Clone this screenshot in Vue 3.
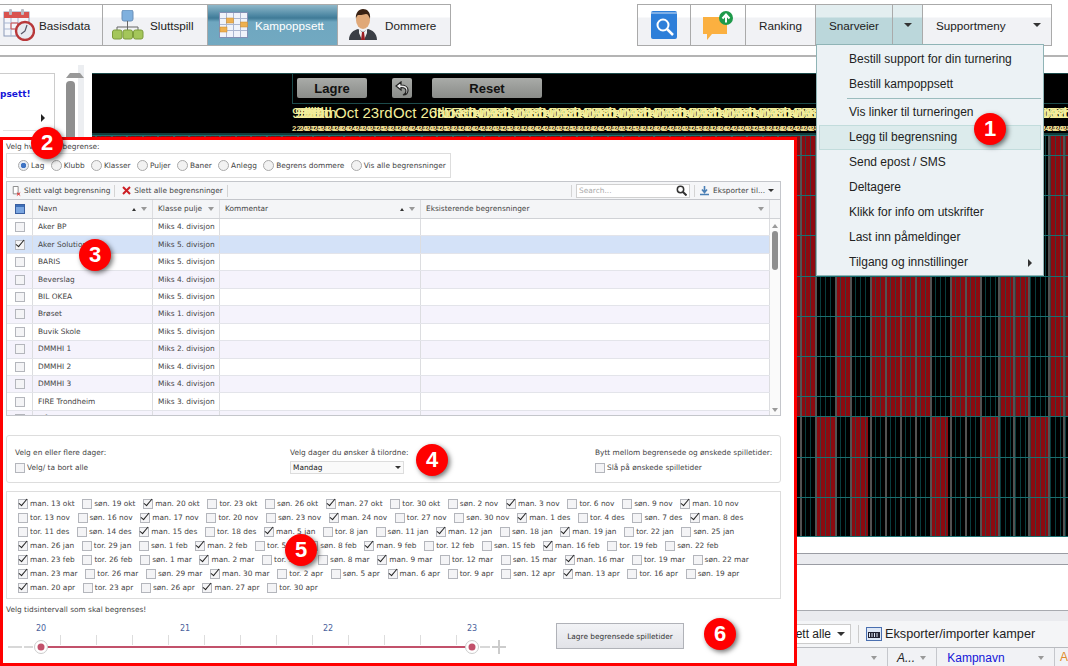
<script setup>
const leftTabs = ['Basisdata', 'Sluttspill', 'Kampoppsett', 'Dommere']
const menu = [
  { t: 'Bestill support for din turnering' },
  { t: 'Bestill kampoppsett', sep: true },
  { t: 'Vis linker til turneringen' },
  { t: 'Legg til begrensning', hot: true },
  { t: 'Send epost / SMS' },
  { t: 'Deltagere' },
  { t: 'Klikk for info om utskrifter' },
  { t: 'Last inn påmeldinger' },
  { t: 'Tilgang og innstillinger', sub: true }
]
const radios = ['Lag', 'Klubb', 'Klasser', 'Puljer', 'Baner', 'Anlegg', 'Begrens dommere', 'Vis alle begrensninger']
const rows = [
  ['Aker BP', 'Miks 4. divisjon'], ['Aker Solutions', 'Miks 5. divisjon'], ['BARIS', 'Miks 5. divisjon'],
  ['Beverslag', 'Miks 4. divisjon'], ['BIL OKEA', 'Miks 5. divisjon'], ['Brøset', 'Miks 1. divisjon'],
  ['Buvik Skole', 'Miks 5. divisjon'], ['DMMHI 1', 'Miks 2. divisjon'], ['DMMHI 2', 'Miks 4. divisjon'],
  ['DMMHI 3', 'Miks 4. divisjon'], ['FIRE Trondheim', 'Miks 3. divisjon'], ['Flå', 'Miks 1. divisjon']
]
const dateRows = [
  ['man. 13 okt', 'søn. 19 okt', 'man. 20 okt', 'tor. 23 okt', 'søn. 26 okt', 'man. 27 okt', 'tor. 30 okt', 'søn. 2 nov', 'man. 3 nov', 'tor. 6 nov', 'søn. 9 nov', 'man. 10 nov'],
  ['tor. 13 nov', 'søn. 16 nov', 'man. 17 nov', 'tor. 20 nov', 'søn. 23 nov', 'man. 24 nov', 'tor. 27 nov', 'søn. 30 nov', 'man. 1 des', 'tor. 4 des', 'søn. 7 des', 'man. 8 des'],
  ['tor. 11 des', 'søn. 14 des', 'man. 15 des', 'tor. 18 des', 'man. 5 jan', 'tor. 8 jan', 'søn. 11 jan', 'man. 12 jan', 'søn. 18 jan', 'man. 19 jan', 'tor. 22 jan', 'søn. 25 jan'],
  ['man. 26 jan', 'tor. 29 jan', 'søn. 1 feb', 'man. 2 feb', 'tor. 5 feb', 'søn. 8 feb', 'man. 9 feb', 'tor. 12 feb', 'søn. 15 feb', 'man. 16 feb', 'tor. 19 feb', 'søn. 22 feb'],
  ['man. 23 feb', 'tor. 26 feb', 'søn. 1 mar', 'man. 2 mar', 'tor. 5 mar', 'søn. 8 mar', 'man. 9 mar', 'tor. 12 mar', 'søn. 15 mar', 'man. 16 mar', 'tor. 19 mar', 'søn. 22 mar'],
  ['man. 23 mar', 'tor. 26 mar', 'søn. 29 mar', 'man. 30 mar', 'tor. 2 apr', 'søn. 5 apr', 'man. 6 apr', 'tor. 9 apr', 'søn. 12 apr', 'man. 13 apr', 'tor. 16 apr', 'søn. 19 apr'],
  ['man. 20 apr', 'tor. 23 apr', 'søn. 26 apr', 'man. 27 apr', 'tor. 30 apr']
]

// Canvas header: the overlapping date labels of the schedule grid
const bigDates = []
for (const x of [200, 203, 206, 209, 212, 216, 220, 224]) bigDates.push({ x, t: '9th' })
bigDates.push({ x: 220, t: 'Oc' }, { x: 243, t: 'Oct 23rd' }, { x: 301, t: 'Oct 26th' })
for (let x = 338; x < 990; x += 7) bigDates.push({ x, t: ['Nov 6', 'Nov 12', 'Dec 4', 'Jan 8', 'Feb 19'][x % 5] })
const tinyDates = []
for (let x = 200; x < 976; x += 7) tinyDates.push({ x, t: '2' + (x % 9) + '/' + (x % 7) })

// Canvas grid: lines and coloured day blocks (x relative to the canvas)
const redUpper = [[0, 725], [743, 760], [778, 838], [858, 888], [906, 936], [956, 976]]
const redLower = [[725, 743], [760, 776], [838, 856], [888, 906], [938, 956]]
const thick = [708, 723, 743, 758, 778, 793, 808, 823, 838, 858, 873, 888, 906, 921, 936, 956, 971]
for (let x = 3; x < 700; x += 15.5) thick.push(Math.round(x))
const thin = []
for (let x = 8; x < 976; x += 5) thin.push(Math.round(x))
const hLines = [0, 20, 60, 100, 141, 181, 221, 261, 281, 322, 362, 401]

const ticks = []
for (let x = 60; x < 470; x += 36) ticks.push(x - 6)
const hours = [{ x: 35, t: '20' }, { x: 179, t: '21' }, { x: 322, t: '22' }, { x: 466, t: '23' }]
const badges = [
  { n: 1, x: 990, y: 129 }, { n: 2, x: 47, y: 143 }, { n: 3, x: 95, y: 255 },
  { n: 4, x: 432, y: 460 }, { n: 5, x: 301, y: 550 }, { n: 6, x: 720, y: 634 }
]
const isMan = (d) => d.startsWith('man')
</script>

<template>
  <div class="page">
    <header class="topbar">
      <nav class="group">
        <div v-for="(t, i) in leftTabs" :key="t" class="tab" :class="['tab' + i, { active: i === 2 }]">
          <svg v-if="i === 0" class="ic" width="32" height="32" viewBox="0 0 32 32">
            <rect x="1" y="3" width="25" height="24" fill="#f4f6fb" stroke="#8c9ab8" />
            <rect x="1" y="3" width="25" height="6" fill="#d9534f" />
            <path d="M1 14h25M1 20h25M8 9v18M15 9v18" stroke="#a9b7d2" fill="none" />
            <path d="M8 14h7v6H8z" fill="none" stroke="#d9534f" />
            <rect x="6" y="0" width="3" height="6" rx="1" fill="#b9bcc4" /><rect x="18" y="0" width="3" height="6" rx="1" fill="#b9bcc4" />
            <circle cx="22" cy="22" r="9" fill="#e8eaf0" stroke="#b8383a" stroke-width="2.400" />
            <path d="M22 22l-4 3M22 22l2-6" stroke="#556" stroke-width="1.200" />
          </svg>
          <svg v-if="i === 1" class="ic" width="32" height="30" viewBox="0 0 32 30">
            <rect x="10" y="0" width="11" height="11" rx="2" fill="#7fb0de" stroke="#6a8fb8" />
            <path d="M15.500 11v6M5 21v-4h21v4M15.500 17v4" stroke="#666" fill="none" />
            <rect x="0.500" y="20" width="9.500" height="9" rx="2" fill="#a4c65a" stroke="#7d9c3c" />
            <rect x="11" y="20" width="9.500" height="9" rx="2" fill="#a4c65a" stroke="#7d9c3c" />
            <rect x="21.500" y="20" width="9.500" height="9" rx="2" fill="#a4c65a" stroke="#7d9c3c" />
          </svg>
          <svg v-if="i === 2" class="ic" width="30" height="26" viewBox="0 0 30 26">
            <rect x="0.500" y="0.500" width="28" height="25" fill="#f0f3fa" stroke="#8290b5" />
            <path d="M7.500 1v24M14.500 1v24M21.500 1v24M1 6.500h27M1 12.500h27M1 18.500h27" stroke="#aab6d0" fill="none" />
            <rect x="7.500" y="6" width="7" height="5" fill="#eeb04f" stroke="#c98a2f" stroke-width=".5" /><rect x="21.500" y="10" width="7" height="5" fill="#eeb04f" stroke="#c98a2f" stroke-width=".5" /><rect x="1" y="15" width="7" height="5" fill="#eeb04f" stroke="#c98a2f" stroke-width=".5" />
          </svg>
          <svg v-if="i === 3" class="ic" width="29" height="32" viewBox="0 0 29 32">
            <path d="M0 31c0-7 5-10 9-11l5 3 5-3c4 1 9 4 9 11z" fill="#3b3f46" />
            <path d="M10 20l4 4 4-4 0 4-3 7h-2l-3-7z" fill="#f1f1f1" />
            <path d="M13 23h2l1 8h-4z" fill="#9c1f24" />
            <ellipse cx="14" cy="11" rx="7" ry="9" fill="#e0a878" />
            <path d="M7 10c-1-6 3-10 7-10s8 3 7 10c-1-3-2-5-4-5-3 1-7 1-8 1-1 1-2 2-2 4z" fill="#3a2113" />
          </svg>
          <span>{{ t }}</span>
        </div>
      </nav>
      <nav class="group right">
        <div class="cell c-book">
          <svg width="26" height="28" viewBox="0 0 26 28">
            <rect width="26" height="28" rx="2" fill="#2e7fd9" /><rect y="1.500" width="26" height="1" fill="#cfe2f6" />
            <circle cx="12" cy="14" r="5.500" fill="none" stroke="#fff" stroke-width="2" /><path d="M16 18l6 6" stroke="#fff" stroke-width="2.500" />
          </svg>
        </div>
        <div class="cell c-chat">
          <svg width="31" height="29" viewBox="0 0 31 29">
            <path d="M0 6h24v17H9l-5 6v-6H0z" fill="#fbb040" />
            <circle cx="23" cy="7" r="7" fill="#1e9a4a" /><path d="M23 11.500V4M19.500 7.500L23 3.500l3.500 4" stroke="#fff" stroke-width="2" fill="none" />
          </svg>
        </div>
        <div class="cell c-rank">Ranking</div>
        <div class="cell c-snar on">Snarveier</div>
        <div class="cell c-caret on"><i class="caret"></i></div>
        <div class="cell c-supp">Supportmeny<i class="caret"></i></div>
      </nav>
    </header>

    <section class="main">
      <aside class="pane">
        <div class="pane-box">
          <b class="pane-link">psett!</b>
          <i class="pane-arrow"></i>
        </div>
        <div class="pane-scroll"><i class="up"></i><i class="thumb"></i></div>
      </aside>
      <div class="canvas">
        <div class="canvas-head">
          <div class="canvas-tools">
            <button class="btn lagre">Lagre</button>
            <button class="btn undo">
              <svg width="14" height="15" viewBox="0 0 14 15"><path d="M6 1L1 5l5 4V6.500c3 0 5 1 5 3.500 0 2-1 3-3 4 4 0 5-2.500 5-5 0-3-3-5-7-5z" fill="#eee" stroke="#222" stroke-width="1.200" /></svg>
            </button>
            <button class="btn reset">Reset</button>
          </div>
          <span v-for="(d, i) in bigDates" :key="'b' + i" class="big" :style="{ left: d.x + 'px' }">{{ d.t }}</span>
          <span v-for="(d, i) in tinyDates" :key="'t' + i" class="tiny" :style="{ left: d.x + 'px' }">{{ d.t }}</span>
        </div>
        <svg class="grid" width="976" height="402" viewBox="0 0 976 402">
          <rect v-for="r in redUpper" :key="'u' + r[0]" :x="r[0]" y="0" :width="r[1] - r[0]" height="281" fill="#8c0a10" />
          <rect v-for="r in redLower" :key="'l' + r[0]" :x="r[0]" y="281" :width="r[1] - r[0]" height="121" fill="#8c0a10" />
          <path v-for="x in thin" :key="'n' + x" :d="`M${x + .5} 0V402`" stroke="#0d5557" stroke-opacity=".7" />
          <path v-for="x in thick" :key="'k' + x" :d="`M${x + 1} 0V402`" stroke="#525252" stroke-width="2" />
          <path v-for="y in hLines" :key="'h' + y" :d="`M0 ${y + .5}H976`" stroke="#1a6f70" />
        </svg>
      </div>
    </section>

    <div class="gap"></div>
    <div class="splitter"></div>
    <div class="blank"></div>
    <div class="strip"></div>
    <div class="lower-tools">
      <div class="select-all"><span>Slett alle</span><i class="caret"></i></div>
      <i class="vsep"></i>
      <svg width="16" height="14" viewBox="0 0 16 14"><rect x=".5" y=".5" width="15" height="13" fill="#dfe8f6" stroke="#4a6fb0" /><rect x="2" y="5" width="12" height="6" fill="#223" /><path d="M3.500 6v4M6 6v4M8.500 6v4M11 6v4" stroke="#dfe8f6" /></svg>
      <span class="xml">Eksporter/importer kamper</span>
    </div>
    <div class="lower-head">
      <div class="lh lh1"><i class="funnel"></i></div>
      <div class="lh lh2"><em>A...</em><i class="funnel"></i></div>
      <div class="lh lh3"><span class="kn">Kampnavn</span><i class="funnel"></i></div>
      <div class="lh4">A</div>
    </div>

    <div class="dropdown">
      <div v-for="m in menu" :key="m.t" class="mi" :class="{ hot: m.hot, sep: m.sep }">
        {{ m.t }}<i v-if="m.sub" class="subarrow"></i>
      </div>
    </div>

    <div class="modal">
      <div class="lbl">Velg hva du vil begrense:</div>
      <div class="radios">
        <label v-for="(r, i) in radios" :key="r" class="radio"><i class="dot" :class="{ sel: i === 0 }"></i>{{ r }}</label>
      </div>
      <div class="table">
        <div class="ttools">
          <svg width="9" height="12" viewBox="0 0 11 12"><path d="M1.500 .5h6v9h-6z" fill="#fff" stroke="#777" /><path d="M6 8l4 3.500M10 8l-4 3.500" stroke="#d22" stroke-width="1.200" /></svg>
          <span class="tl">Slett valgt begrensning</span><i class="tsep"></i>
          <svg class="xicon" width="9" height="9" viewBox="0 0 9 9"><path d="M1 1l7 7M8 1L1 8" stroke="#cc1f25" stroke-width="2" /></svg>
          <span class="tl">Slett alle begrensninger</span><i class="tsep"></i>
          <div class="spacer"></div>
          <i class="tsep"></i>
          <div class="search"><span>Search...</span>
            <svg width="11" height="11" viewBox="0 0 11 11"><circle cx="4.500" cy="4.500" r="3.200" fill="none" stroke="#333" stroke-width="1.500" /><path d="M7 7l3.500 3.500" stroke="#333" stroke-width="2" /></svg>
          </div>
          <i class="tsep"></i>
          <svg width="11" height="10" viewBox="0 0 11 10"><path d="M5.500 0v5M3 3.500l2.500 3 2.500-3M1 8.500h9" stroke="#4a7fb5" stroke-width="1.600" fill="none" /></svg>
          <span class="tl">Eksporter til...</span><i class="caret small"></i>
        </div>
        <div class="thead">
          <div class="col c0"><i class="cb hdr"></i></div>
          <div class="col c1"><span>Navn</span><i class="sort"></i><i class="funnel"></i></div>
          <div class="col c2"><span>Klasse pulje</span><i class="funnel"></i></div>
          <div class="col c3"><span>Kommentar</span><i class="sort"></i><i class="funnel"></i></div>
          <div class="col c4"><span>Eksisterende begrensninger</span><i class="funnel"></i></div>
          <div class="col c5"></div>
        </div>
        <div class="tbody">
          <div class="trows">
            <div v-for="(r, i) in rows" :key="r[0]" class="tr" :class="{ alt: i % 2 === 1 && i !== 1, sel: i === 1 }">
              <div class="col c0"><i class="cb" :class="{ ck: i === 1 }"></i></div>
              <div class="col c1">{{ r[0] }}</div>
              <div class="col c2">{{ r[1] }}</div>
              <div class="col c3"></div>
              <div class="col c4"></div>
            </div>
          </div>
          <div class="vscroll"><i class="up"></i><i class="vthumb"></i><i class="down"></i></div>
        </div>
      </div>

      <div class="options">
        <div class="opt o1"><span>Velg en eller flere dager:</span><label><i class="cb"></i>Velg/ ta bort alle</label></div>
        <div class="opt o2"><span>Velg dager du ønsker å tilordne:</span><div class="sel-box">Mandag<i class="caret small"></i></div></div>
        <div class="opt o3"><span>Bytt mellom begrensede og ønskede spilletider:</span><label><i class="cb"></i>Slå på ønskede spilletider</label></div>
      </div>

      <div class="dates">
        <div v-for="(row, i) in dateRows" :key="i" class="drow">
          <label v-for="d in row" :key="d" class="date"><i class="cb" :class="{ ck: isMan(d) }"></i>{{ d }}</label>
        </div>
      </div>

      <div class="lbl last">Velg tidsintervall som skal begrenses!</div>
      <div class="slider-row">
        <svg class="slider" width="510" height="45" viewBox="0 0 510 45">
          <text v-for="h in hours" :key="h.t" :x="h.x" y="16" text-anchor="middle" class="hour">{{ h.t }}</text>
          <path v-for="x in ticks" :key="x" :d="`M${x}.5 20V30`" stroke="#ddd" />
          <path d="M2 32H16M18 32H27M474 32H484" stroke="#ccc" stroke-width="1.500" />
          <path d="M493 25v14M486 32h14" stroke="#ccc" stroke-width="2" />
          <path d="M35 32H466" stroke="#c2516b" stroke-width="2" />
          <g v-for="x in [35, 466]" :key="x">
            <circle :cx="x" cy="32" r="6.500" fill="#fff" stroke="#ccc" />
            <circle :cx="x" cy="32" r="3.500" fill="#c2516b" />
          </g>
        </svg>
        <button class="save">Lagre begrensede spilletider</button>
      </div>
    </div>

    <b v-for="b in badges" :key="b.n" class="badge" :style="{ left: b.x - 16 + 'px', top: b.y - 16 + 'px' }">{{ b.n }}</b>
  </div>
</template>

<style scoped>
.page { position: relative; width: 1068px; height: 666px; overflow: hidden; background: #fff; font-family: "Liberation Sans", Arial, sans-serif; color: #222; }
i { display: block; font-style: normal; }

.topbar { display: flex; justify-content: space-between; height: 57px; padding: 4px 16px 0 0; box-sizing: border-box; border-bottom: 2px solid #b4b4b4; }
.group { display: flex; height: 42px; border: 1px solid #aaa; border-left: 0; box-sizing: border-box; background: linear-gradient(#fff 0, #fff 12px, #f1f2f5 13px); }
.group.right { border-left: 1px solid #aaa; }
.tab { display: flex; align-items: center; font-size: 11.700px; border-right: 1px solid #aaa; box-sizing: border-box; }
.tab:last-child { border-right: 0; }
.tab0 { width: 103px; padding-left: 3px; gap: 4px; }
.tab1 { width: 105px; padding-left: 9px; gap: 6px; }
.tab2 { width: 130px; padding-left: 11px; gap: 6px; color: #fff; background: linear-gradient(#8fb8ca 0, #4a85a1 11px, #3f7a96 13px, #6fa7c0 17px, #72a9c1); }
.tab3 { width: 112px; padding-left: 11px; gap: 7px; }
.ic { flex: none; }
.cell { display: flex; align-items: center; justify-content: center; font-size: 11.700px; border-right: 1px solid #aaa; box-sizing: border-box; }
.cell:last-child { border-right: 0; }
.c-book { width: 53px; } .c-chat { width: 55px; } .c-rank { width: 70px; }
.c-snar { width: 77px; } .c-caret { width: 30px; }
.c-supp { width: 128px; padding: 0 10px 0 13px; justify-content: space-between; }
.on { background: linear-gradient(#e3eef0 0, #e3eef0 12px, #bbd7db 13px); }
.caret { width: 0; height: 0; border: 4px solid transparent; border-top: 4px solid #333; border-bottom: 0; flex: none; }
.caret.small { border-width: 3px 3px 0; }

.main { display: flex; height: 464px; margin-top: 16px; }
.pane { width: 92px; flex: none; display: flex; position: relative; }
.pane-box { width: 55px; height: 100%; border: 1px solid #ccc; border-left: 0; box-sizing: border-box; position: relative; }
.pane-link { position: absolute; left: 0; top: 15px; font: bold 9px "DejaVu Sans", sans-serif; color: #1515d8; }
.pane-arrow { position: absolute; left: 41px; top: 40px; border: 4px solid transparent; border-left: 4px solid #222; border-right: 0; }
.pane-arrow::after { content: ""; position: absolute; left: -42px; top: 12px; width: 55px; height: 1px; background: #e2e2e2; }
.pane-scroll { position: absolute; left: 63px; top: -8px; width: 21px; height: 100%; background: linear-gradient(90deg, #fff 15px, #eceef1 15px); }
.pane-scroll .up { margin: 8px 0 0 3px; border: 4px solid transparent; border-bottom: 5px solid #999; border-top: 0; }
.thumb { width: 9px; height: 60px; margin: 3px 0 0 3px; border-radius: 4px; background: #8f8f8f; }

.canvas { flex: 1; background: #000; position: relative; overflow: hidden; }
.canvas-head { height: 62px; position: relative; overflow: hidden; border-top: 1px solid #1c4a4a; box-sizing: border-box; }
.canvas-tools { position: absolute; left: 200px; top: 0; right: 0; height: 29px; border-left: 1px solid #1c4a4a; border-bottom: 1px solid #1c4a4a; }
.canvas-head::after { content: ""; position: absolute; left: 0; right: 0; bottom: 0; height: 2px; background: #123c3c; }
.btn { position: absolute; top: 4px; height: 20px; border: 0; border-radius: 2px; padding: 0; background: linear-gradient(#a9aba8, #8a8c89); font: bold 13px "Liberation Sans", sans-serif; color: #111; display: flex; align-items: center; justify-content: center; }
.lagre { left: 4px; width: 70px; } .undo { left: 99px; width: 20px; } .reset { left: 139px; width: 110px; }
.big { position: absolute; top: 30px; font-size: 15px; line-height: 18px; color: #f3ee9c; white-space: nowrap; }
.tiny { position: absolute; top: 50px; font: bold 8px/9px "Liberation Sans", sans-serif; color: #efdf92; white-space: nowrap; }
.grid { display: block; }

.gap { height: 16px; }
.splitter { height: 10px; background: #eaebef; border-top: 1px solid #9a9ca3; border-bottom: 1px solid #9a9ca3; }
.blank { height: 45px; }
.strip { height: 10px; background: #eaebef; border-top: 1px solid #a8aab0; }
.lower-tools { height: 27px; background: #f4f5f7; display: flex; align-items: center; padding-left: 790px; border-bottom: 1px solid #b9bbc0; box-sizing: border-box; gap: 7px; }
.select-all { width: 61px; height: 20px; box-sizing: border-box; border: 1px solid #ccc; background: #fff; display: flex; align-items: center; justify-content: flex-end; gap: 6px; padding-right: 5px; font-size: 12px; overflow: hidden; white-space: nowrap; }
.vsep { width: 1px; height: 18px; background: #ccc; }
.xml { font-size: 12.700px; color: #222; margin-left: -4px; }
.lower-head { display: flex; height: 19px; padding-left: 790px; background: #f1f2f5; font-size: 12px; }
.lh { display: flex; align-items: center; justify-content: flex-end; padding-right: 5px; box-sizing: border-box; border-right: 1px solid #c5c7cc; height: 19px; }
.lh1 { width: 100px; } .lh2 { width: 50px; justify-content: space-between; padding-left: 9px; } .lh3 { width: 120px; justify-content: space-between; padding-left: 10px; }
.lh4 { padding-left: 5px; color: #e08a2a; line-height: 19px; }
.kn { color: #1515d8; }

.dropdown { position: absolute; left: 816px; top: 44px; width: 228px; height: 232px; box-sizing: border-box; background: #ecf2f5; border: 1px solid #8fb4b6; padding: 2px; font-size: 12px; }
.mi { position: relative; height: 25px; line-height: 25px; padding-left: 30px; white-space: nowrap; }
.mi.sep { height: 27px; line-height: 25px; margin-bottom: 1px; }
.mi.sep::after { content: ""; position: absolute; left: 28px; right: 0; bottom: 0; height: 1px; background: #9bbcbe; }
.mi.hot { background: #dcebec; box-shadow: inset 0 0 0 1px #c2dcdc; }
.subarrow { position: absolute; right: 9px; top: 9px; border: 4px solid transparent; border-left: 4px solid #333; border-right: 0; }

.modal { position: absolute; left: 0; top: 137px; width: 797px; height: 529px; box-sizing: border-box; border: 3px solid #f00; background: #fff; padding: 1px 13px 0 3px; font: 7.400px/10px "DejaVu Sans", sans-serif; color: #444; }
.lbl { height: 11px; line-height: 11px; }
.radios { display: flex; align-items: center; gap: 6.300px; margin-top: 1px; width: 445px; height: 25px; box-sizing: border-box; border: 1px solid #ddd; padding-left: 11px; white-space: nowrap; }
.radio { display: flex; align-items: center; gap: 2px; }
.dot { width: 9px; height: 9px; border-radius: 50%; border: 1px solid #aaa; background: #f2f2f2; }
.dot.sel { background: radial-gradient(circle, #3f74c4 0 2.500px, #e8edf5 3px); }
.table { margin-top: 3px; height: 235px; box-sizing: border-box; border: 1px solid #c4c6cb; display: flex; flex-direction: column; }
.ttools { flex: none; height: 18px; box-sizing: border-box; display: flex; align-items: center; gap: 3px; padding: 0 6px 0 5px; background: #f5f6f8; border-bottom: 1px solid #c4c6cb; }
.xicon { margin-left: 3px; }
.tl { white-space: nowrap; }
.tsep { width: 1px; height: 12px; background: #d4d4d4; margin: 0 1px; }
.spacer { flex: 1; }
.search { width: 114px; height: 14px; box-sizing: border-box; background: #fff; border: 1px solid #d0d0d0; color: #aaa; display: flex; justify-content: space-between; align-items: center; padding: 0 2px; }
.thead { flex: none; height: 19px; display: flex; background: #f4f5f7; border-bottom: 1px solid #d0d2d6; box-sizing: border-box; }
.col { box-sizing: border-box; border-right: 1px solid #dcdde0; display: flex; align-items: center; padding-left: 5px; white-space: nowrap; overflow: hidden; flex: none; }
.c0 { width: 26px; justify-content: center; padding: 0; } .c1 { width: 120px; } .c2 { width: 67px; } .c3 { width: 201px; } .c4 { width: 349px; } .c5 { flex: 1; border-right: 0; }
.thead .col span { flex: 1; }
.sort { width: 0; height: 0; border: 2.500px solid transparent; border-bottom: 3px solid #333; border-top: 0; margin-right: 5px; }
.funnel { flex: none; width: 0; height: 0; border: 3px solid transparent; border-top: 4px solid #999; border-bottom: 0; margin-right: 5px; }
.tbody { flex: 1; display: flex; overflow: hidden; }
.trows { width: 763px; flex: none; overflow: hidden; }
.tr { display: flex; height: 17.450px; box-sizing: border-box; border-bottom: 1px solid #e3e4ea; background: #fff; }
.tr.alt { background: #f5f3fc; }
.tr.sel { background: #d4e2f8; }
.cb { position: relative; flex: none; display: block; box-sizing: border-box; width: 10px; height: 10px; border: 1px solid #b4b6bc; background: #f4f4f6; }
.cb.hdr { background: #7ba6e0; border-color: #3a5fa0; box-shadow: inset 0 2px 0 #3d6fb8; }
.cb.ck::after { content: ""; position: absolute; left: 2px; top: -3px; width: 4px; height: 9px; border: solid #222; border-width: 0 1.500px 1.500px 0; transform: rotate(40deg); box-sizing: border-box; }
.vscroll { flex: 1; display: flex; flex-direction: column; align-items: center; background: #fafafa; padding-top: 5px; }
.vscroll .up { border: 3px solid transparent; border-bottom: 4px solid #999; border-top: 0; }
.vthumb { width: 6px; height: 39px; margin-top: 3px; background: #8f8f8f; border-radius: 3px; }
.vscroll .down { margin-top: auto; margin-bottom: 3px; border: 3px solid transparent; border-top: 4px solid #999; border-bottom: 0; }

.options { display: flex; margin-top: 19px; height: 48px; box-sizing: border-box; border: 1px solid #ddd; border-radius: 3px; padding: 12px 8px 0; }
.opt { display: flex; flex-direction: column; gap: 5px; white-space: nowrap; flex: none; }
.opt label { display: flex; align-items: center; gap: 2px; }
.o1 { width: 275px; } .o2 { width: 305px; }
.o2 { gap: 3px; }
.sel-box { width: 114px; height: 13px; box-sizing: border-box; border: 1px solid #ddd; background: #fafafa; color: #222; display: flex; justify-content: space-between; align-items: center; padding: 0 2px; }

.dates { margin-top: 8px; height: 108px; box-sizing: border-box; border: 1px solid #ddd; padding: 5px 0 0 11px; }
.drow { display: flex; height: 14px; gap: 7.700px; align-items: center; white-space: nowrap; }
.date { display: flex; align-items: center; gap: 2px; }
.last { margin-top: 5px; }
.slider-row { display: flex; align-items: flex-start; }
.slider { flex: none; }
.hour { font: 8px "DejaVu Sans", sans-serif; fill: #4a5f9c; }
.save { margin: 8px 0 0 40px; width: 128px; height: 26px; border: 1px solid #b0b2b8; background: linear-gradient(#f2f3f6, #e2e3e8); font: 7.400px "DejaVu Sans", sans-serif; color: #333; padding: 0; }

.badge { position: absolute; width: 32px; height: 32px; border-radius: 50%; background: #f00; color: #fff; font: bold 22px/32px "Liberation Sans", sans-serif; text-align: center; box-shadow: 2px 2px 5px rgba(0, 0, 0, .55); }
</style>
